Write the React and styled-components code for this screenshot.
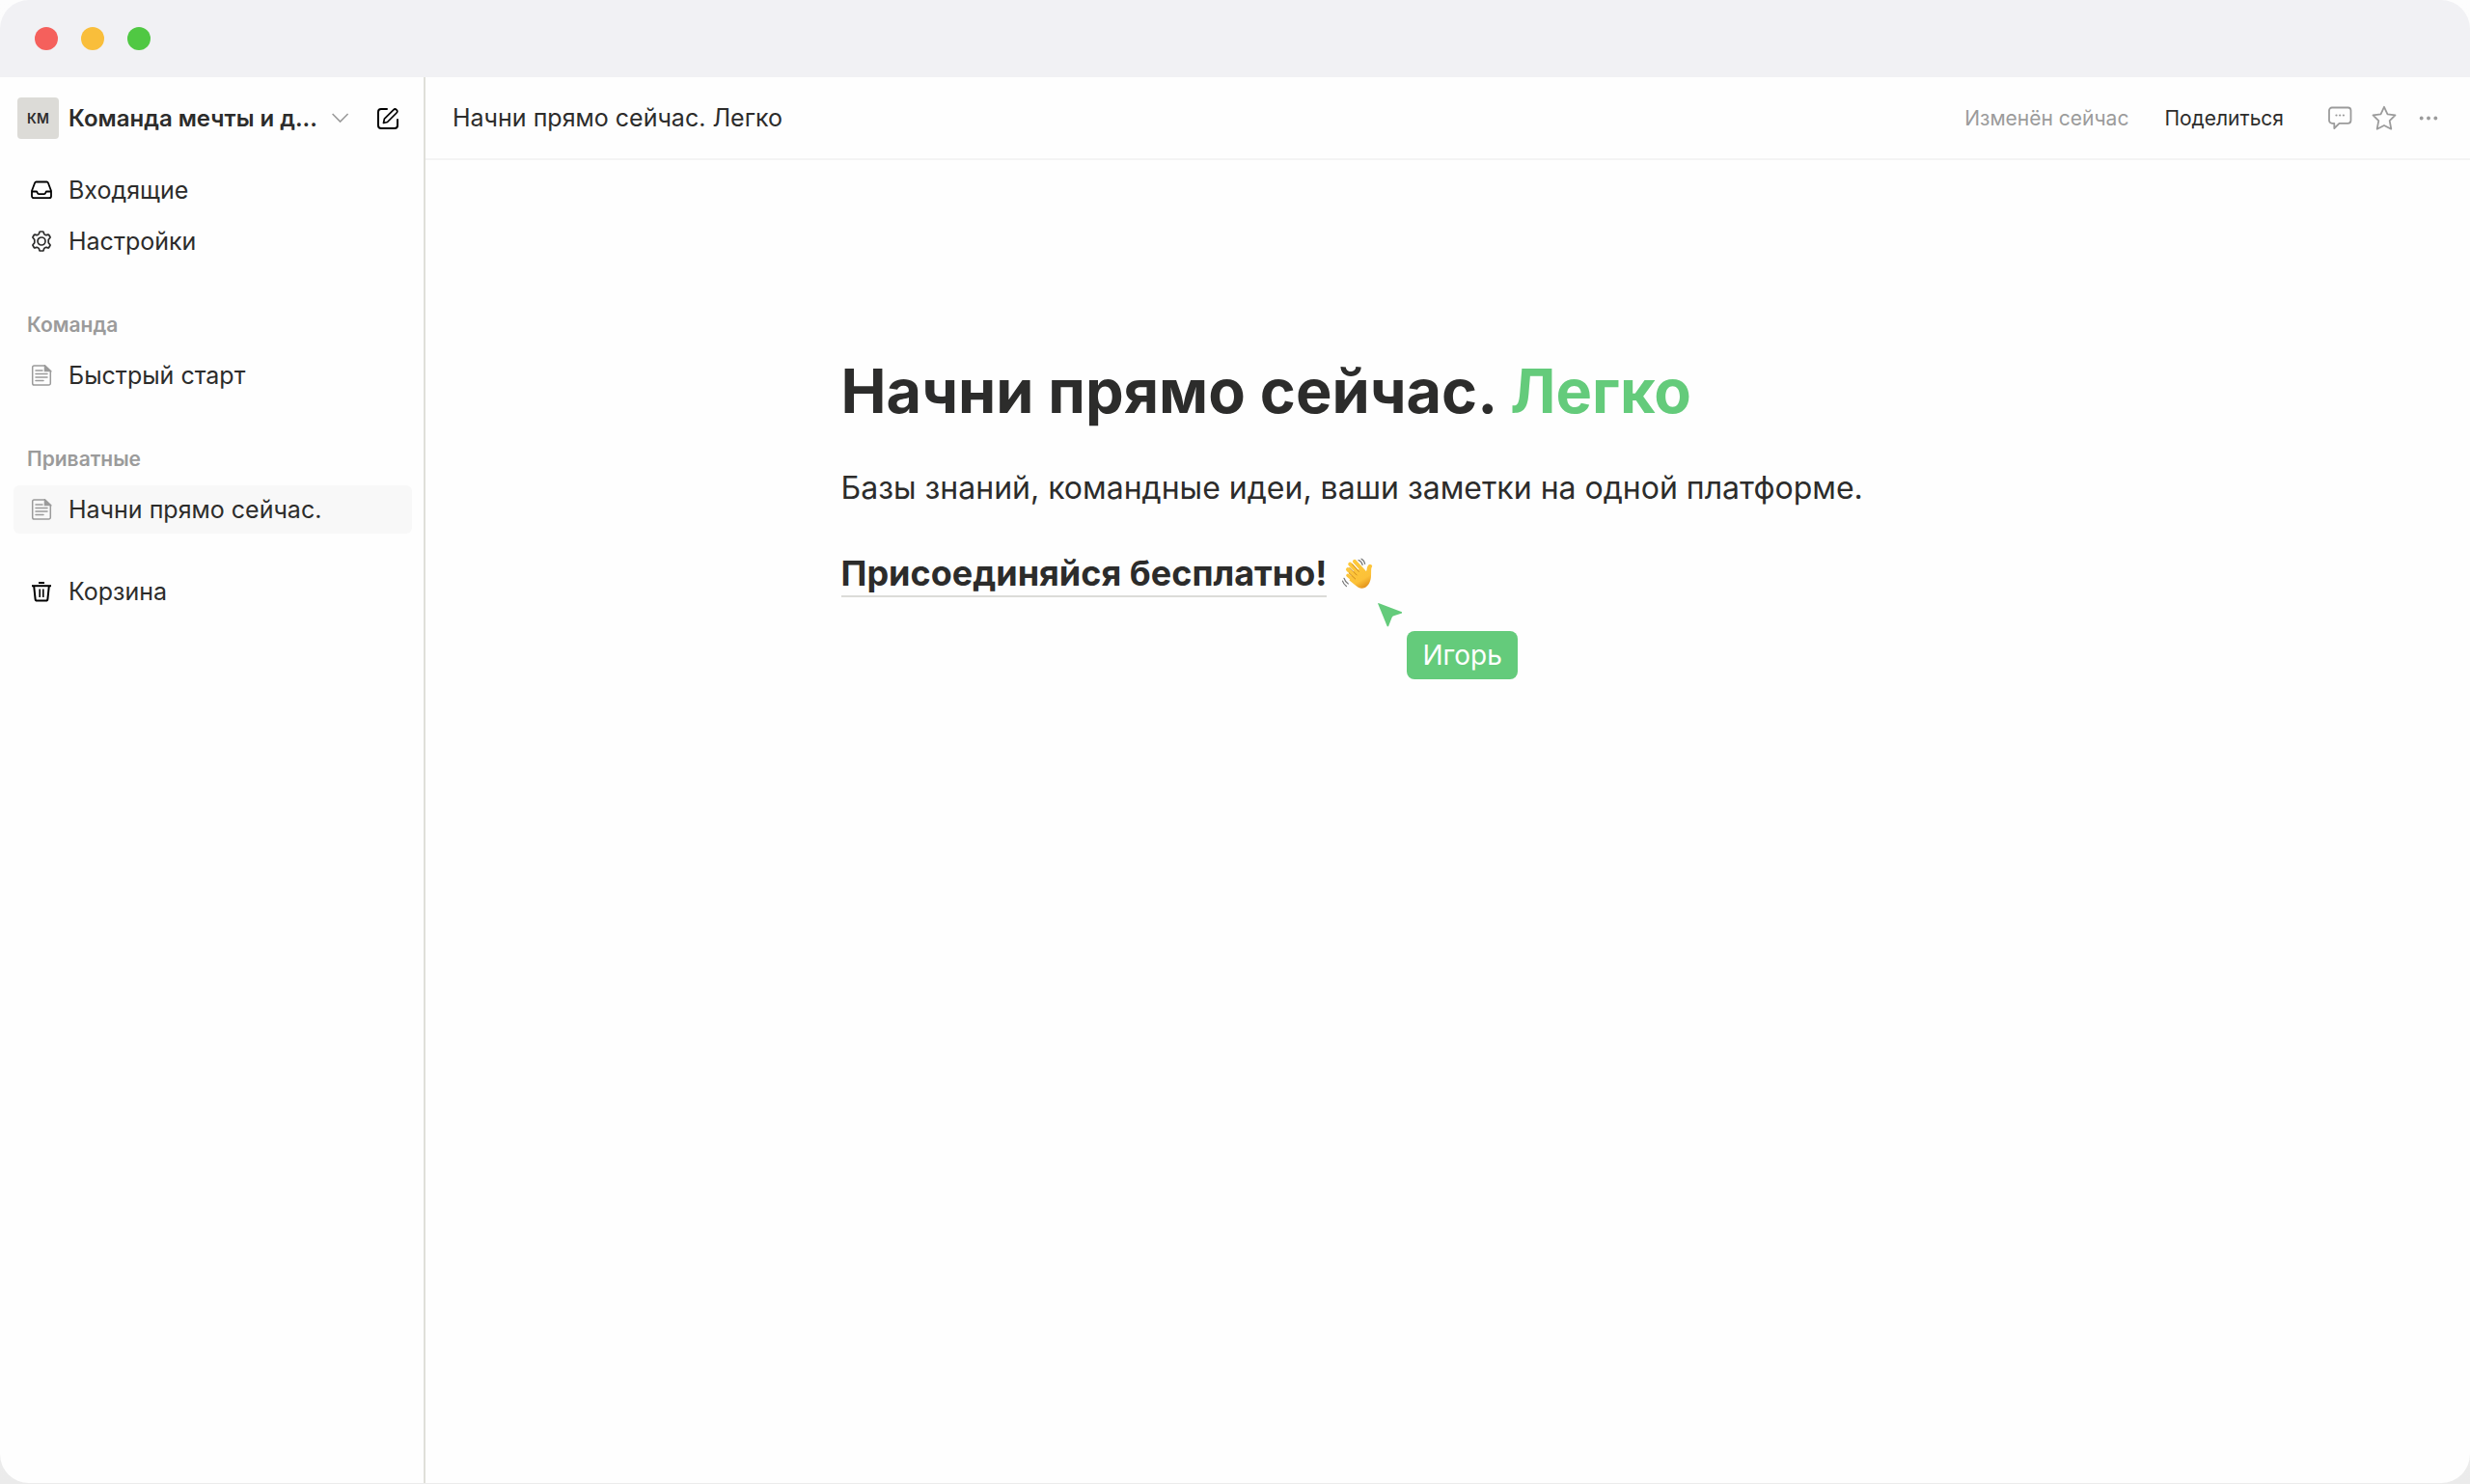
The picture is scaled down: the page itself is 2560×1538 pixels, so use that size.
import React from "react";
import styled, { createGlobalStyle } from "styled-components";

const privatePages = [{ title: "Начни прямо сейчас.", active: true }];
const teamPages = [{ title: "Быстрый старт", active: false }];

const App = () => {
  return (
    <>
      <GlobalStyle />
      <Window>
        <TitleBar>
          <Light color="#f5605c" />
          <Light color="#f9be3b" />
          <Light color="#50c843" />
        </TitleBar>
        <Body>
          <Sidebar />
          <Main>
            <Header />
            <Document />
          </Main>
        </Body>
      </Window>
    </>
  );
};

const Sidebar = () => (
  <Aside>
    <TeamRow>
      <TeamButton type="button">
        <Avatar>КМ</Avatar>
        <TeamName>Команда мечты и д...</TeamName>
        <ChevronIcon />
      </TeamButton>
      <IconButton type="button" aria-label="Новая страница">
        <EditIcon />
      </IconButton>
    </TeamRow>
    <Nav>
      <NavLink href="#inbox">
        <InboxIcon />
        Входящие
      </NavLink>
      <NavLink href="#settings">
        <GearIcon />
        Настройки
      </NavLink>
    </Nav>
    <PageGroup title="Команда" pages={teamPages} />
    <PageGroup title="Приватные" pages={privatePages} />
    <TrashNav>
      <NavLink href="#trash">
        <TrashIcon />
        Корзина
      </NavLink>
    </TrashNav>
  </Aside>
);

const PageGroup = ({ title, pages }) => (
  <Group>
    <GroupTitle>{title}</GroupTitle>
    {pages.map((page) => (
      <NavLink href="#page" key={page.title} $active={page.active}>
        <PageIcon />
        {page.title}
      </NavLink>
    ))}
  </Group>
);

const Header = () => (
  <TopBar>
    <Crumb>Начни прямо сейчас. Легко</Crumb>
    <Edited>Изменён сейчас</Edited>
    <ShareButton type="button">Поделиться</ShareButton>
    <Actions>
      <IconButton type="button" aria-label="Комментарии">
        <CommentIcon />
      </IconButton>
      <IconButton type="button" aria-label="В избранное">
        <StarIcon />
      </IconButton>
      <IconButton type="button" aria-label="Ещё">
        <DotsIcon />
      </IconButton>
    </Actions>
  </TopBar>
);

const Document = () => (
  <Article>
    <Title>
      Начни прямо сейчас. <Accent>Легко</Accent>
    </Title>
    <Lead>
      Базы знаний, командные идеи, ваши заметки на одной платформе.
    </Lead>
    <JoinRow>
      <JoinLink href="#join">Присоединяйся бесплатно!</JoinLink>
      <WaveIcon />
      <Collaborator>
        <CursorIcon />
        <CursorName>Игорь</CursorName>
      </Collaborator>
    </JoinRow>
  </Article>
);

/* Icons */

const ChevronIcon = () => (
  <svg width="18" height="11" viewBox="0 0 18 11" fill="none">
    <path d="M.6 1l8 8 8-8" stroke="#9b9b9b" strokeWidth="1.6" />
  </svg>
);

const EditIcon = () => (
  <svg width="24" height="24" viewBox="0 0 24 24" fill="none" stroke="#000" strokeWidth="2">
    <path d="M11 2H5a3 3 0 0 0-3 3v14a3 3 0 0 0 3 3h14a3 3 0 0 0 3-3v-6" strokeLinecap="round" />
    <path d="M7.5 16.5l.9-4.3 9.4-9.4a2.2 2.2 0 0 1 3.2 3.2l-9.5 9.5z" strokeWidth="1.7" strokeLinejoin="round" />
  </svg>
);

const InboxIcon = () => (
  <svg width="22" height="22" viewBox="0 0 22 22" fill="none" stroke="#000" strokeWidth="1.8" strokeLinejoin="round">
    <path d="M5.6 2.5h10.8a1.6 1.6 0 0 1 1.5 1l3.1 8.3v5.4a2 2 0 0 1-2 2H3a2 2 0 0 1-2-2v-5.4l3.1-8.3a1.6 1.6 0 0 1 1.5-1z" />
    <path d="M1 12.5h4.6c.6 0 .8.4 1 .9.3 1 .8 1.7 1.8 1.7h5.2c1 0 1.5-.7 1.8-1.7.2-.5.4-.9 1-.9H21" />
  </svg>
);

const GearIcon = () => (
  <svg width="22" height="22" viewBox="0 0 22 22" fill="none" stroke="#2c2c2b" strokeWidth="1.7" strokeLinejoin="round">
    <path d="M9.7 1h2.6q.6 0 .8.6l.5 1.7q.2.5.7.7l.9.5q.4.2.9.1l1.7-.5q.6-.1.9.4l1.2 2q.3.5-.1 1L18.6 8.8q-.4.4-.4.9v2.6q0 .5.4.9l1.2 1.3q.4.5.1 1l-1.2 2q-.3.5-.9.4l-1.7-.5q-.5-.1-.9.1l-.9.5q-.5.2-.7.7l-.5 1.7q-.2.6-.8.6H9.7q-.6 0-.8-.6l-.5-1.7q-.2-.5-.7-.7l-.9-.5q-.4-.2-.9-.1l-1.7.5q-.6.1-.9-.4l-1.2-2q-.3-.5.1-1l1.2-1.3q.4-.4.4-.9V9.7q0-.5-.4-.9L2.2 7.5q-.4-.5-.1-1l1.2-2q.3-.5.9-.4l1.7.5q.5.1.9-.1l.9-.5q.5-.2.7-.7l.5-1.7q.2-.6.8-.6z" />
    <circle cx="11" cy="11" r="4" />
  </svg>
);

const PageIcon = () => (
  <svg width="22" height="22" viewBox="0 0 22 22" fill="none" stroke="#9b9b9b" strokeWidth="1.5">
    <path d="M14.5 1H3.5A1.8 1.8 0 0 0 1.7 2.8v16.4A1.8 1.8 0 0 0 3.5 21h15a1.8 1.8 0 0 0 1.8-1.8V6.5z" />
    <path d="M14.5 1v5.5h5.8z" fill="#9b9b9b" />
    <path d="M5 6h7M5 9.5h12M5 13h12M5 16.5h8" strokeLinecap="round" />
  </svg>
);

const TrashIcon = () => (
  <svg width="22" height="22" viewBox="0 0 22 22" fill="none" stroke="#000">
    <path d="M8 2h6" strokeWidth="2" />
    <path d="M1 5.2h20" strokeWidth="2" />
    <path d="M3.2 5.5l1.4 13.3A2 2 0 0 0 6.6 20.6h8.8a2 2 0 0 0 2-1.8L18.8 5.5" strokeWidth="2" />
    <path d="M9.2 8.5v8.5M12.8 8.5v8.5" strokeWidth="1.6" />
  </svg>
);

const CommentIcon = () => (
  <svg width="26" height="26" viewBox="0 0 26 26" fill="none" stroke="#9b9b9b" strokeWidth="1.8" strokeLinejoin="round">
    <path d="M5 2.5h16.5a3 3 0 0 1 3 3v10.3a3 3 0 0 1-3 3h-9L7.3 24v-5.2H5a3 3 0 0 1-3-3V5.5a3 3 0 0 1 3-3z" />
    <g fill="#9b9b9b" stroke="none">
      <circle cx="9.5" cy="10.5" r="1.1" />
      <circle cx="13.2" cy="10.5" r="1.1" />
      <circle cx="16.9" cy="10.5" r="1.1" />
    </g>
  </svg>
);

const StarIcon = () => (
  <svg width="26" height="26" viewBox="0 0 26 26" fill="none" stroke="#9b9b9b" strokeWidth="1.8" strokeLinejoin="round">
    <path d="M13 1.8l3.5 7.5 8 1.1-5.8 5.7 1.6 8.6L13 21l-7.3 3.7 1.6-8.6-5.8-5.7 8-1.1z" />
  </svg>
);

const DotsIcon = () => (
  <svg width="26" height="26" viewBox="0 0 26 26" fill="#9b9b9b">
    <circle cx="5.7" cy="13.5" r="1.9" />
    <circle cx="13" cy="13.5" r="1.9" />
    <circle cx="20.3" cy="13.5" r="1.9" />
  </svg>
);

const WaveIcon = () => (
  <svg width="34" height="34" viewBox="0 0 34 34" fill="none" role="img" aria-label="Привет">
    <defs>
      <linearGradient id="skin" x1="8" y1="4" x2="24" y2="32" gradientUnits="userSpaceOnUse">
        <stop offset="0" stopColor="#fdc93c" />
        <stop offset="0.7" stopColor="#fcc138" />
        <stop offset="1" stopColor="#e08c18" />
      </linearGradient>
    </defs>
    <g stroke="url(#skin)" strokeLinecap="round" strokeWidth="4">
      <path d="M13 3.8l10 11" />
      <path d="M8.2 6.7L19 18" />
      <path d="M6 12.2l10 9.3" />
      <path d="M6 18.4l9 7.1" strokeWidth="3.6" />
    </g>
    <path
      d="M12 14l9-3 2.3 2.8c1 1 2 .2 2.2-1.1.3-1.8.3-3 1.2-4.3 1-1.5 3.1-1.7 4.3-.5.7.8-.5 1.7-.7 3.2-.3 2.2-.1 5-.3 8-.3 5.6-2.5 10.5-7 12.2-3.5 1.3-7-.6-9.6-3.1L7.5 23.5z"
      fill="url(#skin)"
    />
    <path d="M10.5 6.7l6.8 7.7M7.8 10.4l7.4 7.6M7.3 16l6.4 6" stroke="#d08a1c" strokeWidth="1" strokeLinecap="round" />
    <path
      d="M17 2.5c2 .8 3.6 2.6 4.2 5M20 1.2c1.9 1 3.3 2.9 3.7 5.3M2 21.3c.8 2.5 2.2 4.4 4.3 5.7M.5 24.2c.7 2.4 2 4 3.9 5.4"
      stroke="#777"
      strokeWidth="1.2"
      strokeLinecap="round"
    />
  </svg>
);

const CursorIcon = () => (
  <svg width="26" height="26" viewBox="0 0 26 26">
    <path d="M.6.9L25 10.2v1.3l-8.5 2.7c-1 .3-1.5.8-1.9 1.8L11 25.3H9.800L.1 1.5z" fill="#64cb7b" />
  </svg>
);

const GlobalStyle = createGlobalStyle`
  * {
    box-sizing: border-box;
  }
  body {
    margin: 0;
    background: linear-gradient(#fdfdfd, #ebebeb);
    color: #2c2c2b;
    font-family: Inter, "Liberation Sans", sans-serif;
    font-size: 25px;
  }
  button {
    padding: 0;
    border: 0;
    background: none;
    color: inherit;
    font: inherit;
    cursor: pointer;
  }
  a {
    color: inherit;
    text-decoration: none;
  }
  svg {
    display: block;
    flex-shrink: 0;
  }
`;

const Window = styled.div`
  display: flex;
  flex-direction: column;
  min-height: calc(100vh - 1px);
  margin-bottom: 1px;
  border-radius: 30px;
  overflow: hidden;
  background: #fefefe;
`;

const TitleBar = styled.div`
  display: flex;
  align-items: center;
  gap: 24px;
  height: 80px;
  padding: 0 36px;
  background: #f1f1f4;
`;

const Light = styled.span`
  width: 24px;
  height: 24px;
  border-radius: 50%;
  background: ${(props) => props.color};
`;

const Body = styled.div`
  display: flex;
  flex-grow: 1;
`;

const Aside = styled.aside`
  flex-shrink: 0;
  width: 441px;
  padding: 0 12px 0 14px;
  border-right: 2px solid #dfdfd9;
`;

const TeamRow = styled.div`
  display: flex;
  align-items: center;
  justify-content: space-between;
  height: 85px;
  padding: 0 13px 0 4px;
`;

const TeamButton = styled.button`
  display: flex;
  align-items: center;
  justify-content: space-between;
  width: 344px;
`;

const Avatar = styled.span`
  flex-shrink: 0;
  width: 43px;
  height: 43px;
  border-radius: 4px;
  background: #dcdbd7;
  font-size: 14px;
  font-weight: 600;
  line-height: 43px;
  text-align: center;
`;

const TeamName = styled.span`
  flex: 1;
  padding-left: 10px;
  font-size: 24px;
  font-weight: 600;
  text-align: left;
  white-space: nowrap;
`;

const Nav = styled.nav`
  display: flex;
  flex-direction: column;
  gap: 3px;
  padding-top: 7px;
`;

const TrashNav = styled.nav`
  padding-top: 35px;
`;

const NavLink = styled.a`
  display: flex;
  align-items: center;
  gap: 17px;
  height: 50px;
  padding: 0 18px;
  border-radius: 6px;
  background: ${(props) => (props.$active ? "#f8f8f8" : "transparent")};
`;

const Group = styled.section`
  padding-top: 49px;
`;

const GroupTitle = styled.h2`
  margin: 0 0 14px;
  padding: 0 14px;
  color: #9b9b9b;
  font-size: 21px;
  font-weight: 600;
  line-height: 26px;
`;

const Main = styled.main`
  flex: 1;
  min-width: 0;
`;

const TopBar = styled.header`
  display: flex;
  align-items: center;
  height: 86px;
  padding: 0 30px 0 28px;
  border-bottom: 2px solid #f4f4f4;
`;

const Crumb = styled.span`
  flex: 1;
`;

const Edited = styled.span`
  margin-right: 37px;
  color: #9b9b9b;
  font-size: 21px;
`;

const ShareButton = styled.button`
  margin-right: 45px;
  font-size: 21px;
`;

const Actions = styled.div`
  display: flex;
  gap: 20px;
`;

const IconButton = styled.button`
  display: flex;
`;

const Article = styled.article`
  max-width: 1258px;
  margin: 0 auto;
  padding-top: 199px;
`;

const Title = styled.h1`
  margin: 0;
  font-size: 63px;
  font-weight: 700;
  line-height: 80px;
`;

const Accent = styled.span`
  color: #64cb7b;
`;

const Lead = styled.p`
  margin: 41px 0 45px;
  font-size: 32px;
  line-height: 40px;
`;

const JoinRow = styled.div`
  position: relative;
  display: flex;
  align-items: center;
  gap: 16px;
  width: fit-content;
`;

const JoinLink = styled.a`
  border-bottom: 2px solid #dcdcd8;
  font-size: 36px;
  font-weight: 700;
  line-height: 46px;
`;

/* Remote cursor, floats over the page */
const Collaborator = styled.div`
  position: absolute;
  top: 53px;
  left: calc(100% + 3px);
  display: flex;
  gap: 4px;
`;

const CursorName = styled.span`
  height: 50px;
  margin-top: 30px;
  padding: 0 16px;
  border-radius: 8px;
  background: #64cb7b;
  color: #fff;
  font-size: 28px;
  line-height: 50px;
`;

export default App;
